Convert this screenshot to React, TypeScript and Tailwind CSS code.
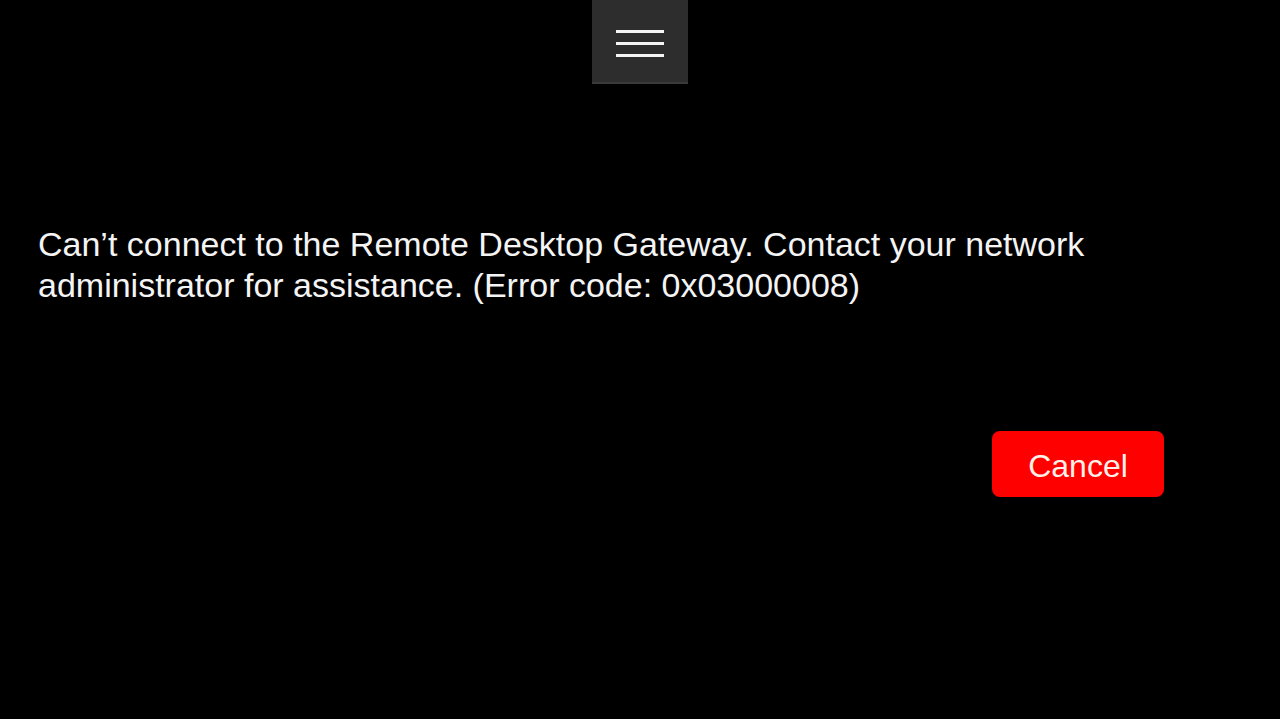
export default function App() {
  return (
    <div className="flex h-[719px] w-[1280px] flex-col bg-black font-['Liberation_Sans',Arial,sans-serif] text-white">
      <div className="flex justify-center">
        <button className="flex h-[84px] w-[96px] flex-col items-center gap-[9px] border-b-2 border-[#3a3a3a] bg-[#2d2d2d] pt-[30px]">
          <span className="h-[3px] w-[48px] bg-[#f4f4f4]" />
          <span className="h-[3px] w-[48px] bg-[#f4f4f4]" />
          <span className="h-[3px] w-[48px] bg-[#f4f4f4]" />
        </button>
      </div>
      <p className="mt-[140px] pl-[38px] text-[34px] leading-[41px] text-[#f4f4f4]">
        Can’t connect to the Remote Desktop Gateway. Contact your network
        <br />
        administrator for assistance. (Error code: 0x03000008)
      </p>
      <div className="mt-[125px] flex justify-end pr-[116px]">
        <button className="flex h-[66px] w-[172px] items-center justify-center rounded-lg bg-[#ff0000] pt-[3px] text-[32px] text-[#fff0ea]">
          Cancel
        </button>
      </div>
    </div>
  );
}
